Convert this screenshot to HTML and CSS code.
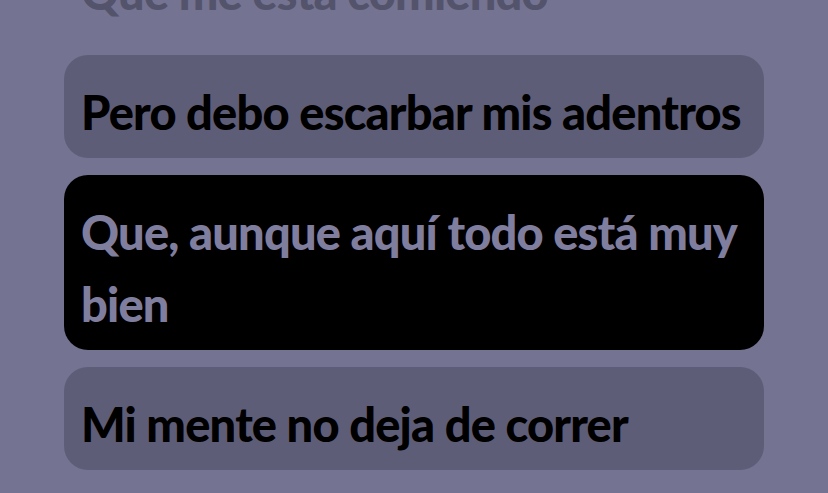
FILE: index.html
```html
<!DOCTYPE html>
<html lang="es">
<head>
<meta charset="utf-8">
<link rel="stylesheet" href="styles.css">
<title>Letra</title>
</head>
<body>
<main class="lyrics">
  <p class="line past">Que me está comiendo</p>
  <p class="line card">Pero debo escarbar mis adentros</p>
  <p class="line card active">Que, aunque aquí todo está muy bien</p>
  <p class="line card">Mi mente no deja de correr</p>
</main>
</body>
</html>
```
FILE: styles.css
```css
html, body {
  margin: 0;
  padding: 0;
  background: #747392;
  height: 100%;
  overflow: hidden;
}

.lyrics {
  width: 700px;
  margin: -65px 0 0 64px;
  display: flex;
  flex-direction: column;
  gap: 17px;
  font-family: Lato, "Noto Sans", sans-serif;
  font-weight: 900;
  font-size: 47px;
  line-height: 72px;
  letter-spacing: -0.8px;
}

.line {
  margin: 0;
  padding: 21px 17px 10px;
  border-radius: 24px;
}

.past {
  color: #54536c;
}

.card {
  background: #5e5d78;
  color: #000;
}

.active {
  background: #000;
  color: #807e9f;
}
```
